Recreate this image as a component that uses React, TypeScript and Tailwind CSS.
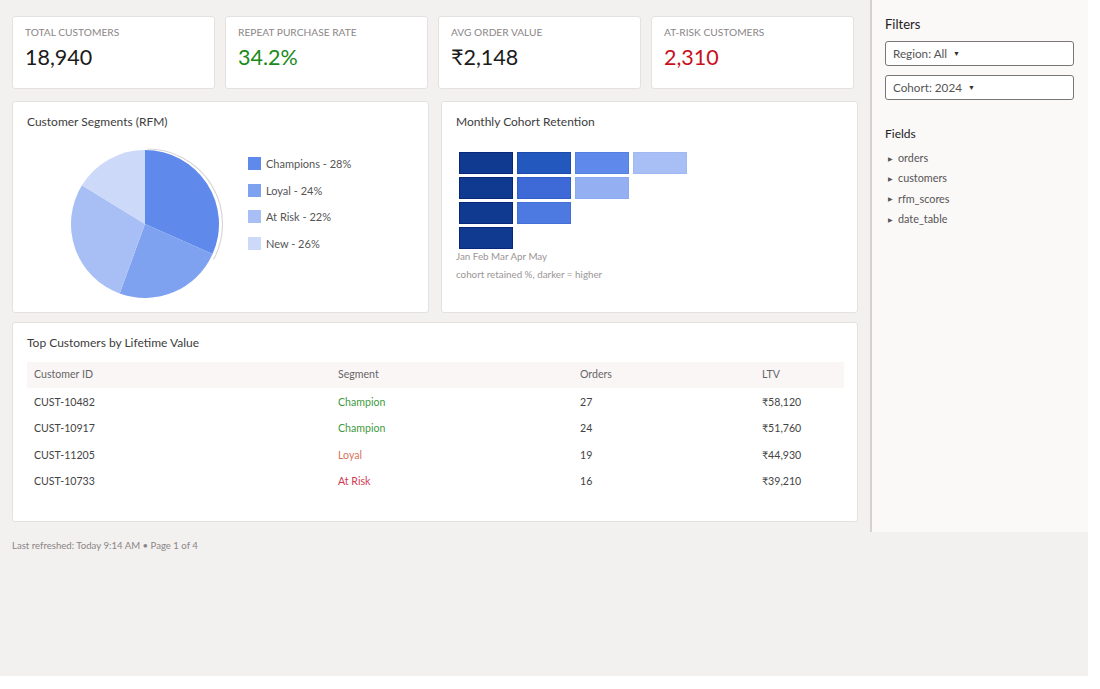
const kpis = [
  { label: 'TOTAL CUSTOMERS', value: '18,940', color: 'text-[#1b1b1b]' },
  { label: 'REPEAT PURCHASE RATE', value: '34.2%', color: 'text-[#188a18]' },
  { label: 'AVG ORDER VALUE', value: '₹2,148', color: 'text-[#1b1b1b]' },
  { label: 'AT-RISK CUSTOMERS', value: '2,310', color: 'text-[#c8101e]' },
];

const segments = [
  { label: 'Champions - 28%', color: '#5f8aeb', from: 0, to: 114 },
  { label: 'Loyal - 24%', color: '#7fa2f0', from: 114, to: 200 },
  { label: 'At Risk - 22%', color: '#a8bff5', from: 200, to: 301.5 },
  { label: 'New - 26%', color: '#cdd9f9', from: 301.5, to: 360 },
];

const cohort = [
  ['bg-[#0f3a8f] border-[#08267a]', 'bg-[#2359bf] border-[#1b4aa8]', 'bg-[#5f8aeb] border-[#5480e0]', 'bg-[#a8bff5] border-[#a0b9f3]'],
  ['bg-[#0f3a8f] border-[#08267a]', 'bg-[#3d6ad6] border-[#325ec8]', 'bg-[#94b0f3] border-[#8caaf0]'],
  ['bg-[#0f3a8f] border-[#08267a]', 'bg-[#4d7ae0] border-[#4470d6]'],
  ['bg-[#0f3a8f] border-[#08267a]'],
];

const customers = [
  { id: 'CUST-10482', seg: 'Champion', segColor: 'text-[#3f9a3f]', orders: 27, ltv: '₹58,120' },
  { id: 'CUST-10917', seg: 'Champion', segColor: 'text-[#3f9a3f]', orders: 24, ltv: '₹51,760' },
  { id: 'CUST-11205', seg: 'Loyal', segColor: 'text-[#d9735a]', orders: 19, ltv: '₹44,930' },
  { id: 'CUST-10733', seg: 'At Risk', segColor: 'text-[#d23a52]', orders: 16, ltv: '₹39,210' },
];

const fields = ['orders', 'customers', 'rfm_scores', 'date_table'];

function slice(cx: number, cy: number, r: number, a0: number, a1: number) {
  const p = (a: number) => {
    const rad = (a * Math.PI) / 180;
    return [cx + r * Math.sin(rad), cy - r * Math.cos(rad)];
  };
  const [x0, y0] = p(a0);
  const [x1, y1] = p(a1);
  const large = a1 - a0 > 180 ? 1 : 0;
  return `M${cx},${cy} L${x0},${y0} A${r},${r} 0 ${large} 1 ${x1},${y1} Z`;
}

// thin grey rim that sits just outside the pie on the right
function rim(cx: number, cy: number, r: number, a1: number) {
  const rad = (a1 * Math.PI) / 180;
  return `M${cx},${cy - r} A${r},${r} 0 0 1 ${cx + r * Math.sin(rad)},${cy - r * Math.cos(rad)}`;
}

const Card = ({ className, children }: { className?: string; children: React.ReactNode }) => (
  <div className={`bg-white border border-[#e6e1e1] rounded-[3px] ${className ?? ''}`}>{children}</div>
);

export default function App() {
  return (
    <div className="w-[1088px] h-[676px] bg-[#f3f0f0] flex text-[#444]" style={{ fontFamily: 'Lato, "Open Sans", sans-serif' }}>
      <main className="w-[870px] px-[12px] pt-[16px]">
        <div className="flex gap-[10px]">
          {kpis.map((k) => (
            <Card key={k.label} className="w-[203px] h-[73px] px-[12px] pt-[9px]">
              <div className="text-[10.2px] leading-[13px] text-[#8a8686]">{k.label}</div>
              <div className={`text-[21.5px] leading-[28px] mt-[4px] ${k.color}`}>{k.value}</div>
            </Card>
          ))}
        </div>

        <div className="flex gap-[12px] mt-[12px]">
          <Card className="w-[417px] h-[212px] px-[14px] pt-[11px] flex flex-col">
            <div className="text-[12px] leading-[17px] text-[#3c3c3c]">Customer Segments (RFM)</div>
            <div className="flex items-start mt-[4px]">
              <svg width="220" height="170" viewBox="0 0 220 170" className="ml-[-14px]">
                <path d={rim(134.5, 90, 75, 118)} fill="none" stroke="#dcd6d6" strokeWidth="1.2" />
                {segments.map((s) => (
                  <path key={s.label} d={slice(132, 90, 74, s.from, s.to)} fill={s.color} />
                ))}
              </svg>
              <ul className="ml-[15px] mt-[23px] flex flex-col gap-[13.7px]">
                {segments.map((s) => (
                  <li key={s.label} className="flex items-center gap-[5px] text-[11px] leading-[13px] text-[#555]">
                    <span className="w-[13px] h-[13px] inline-block" style={{ background: s.color }} />
                    {s.label}
                  </li>
                ))}
              </ul>
            </div>
          </Card>

          <Card className="w-[417px] h-[212px] px-[14px] pt-[11px]">
            <div className="text-[12px] leading-[17px] text-[#3c3c3c]">Monthly Cohort Retention</div>
            <div className="mt-[22px] ml-[3px] flex flex-col gap-[3px]">
              {cohort.map((row, i) => (
                <div key={i} className="flex gap-[4px]">
                  {row.map((c, j) => (
                    <div key={j} className={`w-[54px] h-[22px] border ${c}`} />
                  ))}
                </div>
              ))}
            </div>
            <div className="text-[9.8px] leading-[14px] text-[#9a9595]">Jan Feb Mar Apr May</div>
            <div className="text-[9.8px] leading-[14px] text-[#9a9595] mt-[4px]">cohort retained %, darker = higher</div>
          </Card>
        </div>

        <Card className="w-[846px] h-[200px] mt-[9px] px-[14px] pt-[11px]">
          <div className="text-[12px] leading-[17px] text-[#3c3c3c]">Top Customers by Lifetime Value</div>
          <table className="w-[817px] mt-[11px] text-[10.6px]">
            <thead>
              <tr className="bg-[#faf6f6] h-[26px] text-[#666]">
                <th className="text-left font-normal pl-[7px] w-[311px]">Customer ID</th>
                <th className="text-left font-normal w-[242px]">Segment</th>
                <th className="text-left font-normal w-[182px]">Orders</th>
                <th className="text-left font-normal">LTV</th>
              </tr>
            </thead>
            <tbody className="text-[#444]">
              {customers.map((c) => (
                <tr key={c.id} className="h-[26.5px]">
                  <td className="pl-[7px] pt-[3px]">{c.id}</td>
                  <td className={`pt-[3px] ${c.segColor}`}>{c.seg}</td>
                  <td className="pt-[3px]">{c.orders}</td>
                  <td className="pt-[3px]">{c.ltv}</td>
                </tr>
              ))}
            </tbody>
          </table>
        </Card>

        <div className="mt-[17px] text-[9.6px] text-[#8a8585]">Last refreshed: Today 9:14 AM • Page 1 of 4</div>
      </main>

      <aside className="w-[218px] h-[532px] bg-[#fbf8f8] border-l-2 border-[#d6d1d1] px-[13px] pt-[15px]">
        <div className="text-[13px] leading-[18px] text-[#222]">Filters</div>
        <div className="mt-[8px] flex flex-col gap-[9px]">
          {['Region: All', 'Cohort: 2024'].map((f) => (
            <div key={f} className="h-[25px] w-[189px] border border-[#7a7676] rounded-[3px] bg-white flex items-center px-[7px] text-[11.7px] text-[#555]">
              {f}
              <span className="ml-[6px] text-[7px] text-[#333]">▼</span>
            </div>
          ))}
        </div>
        <div className="mt-[25px] text-[12px] leading-[17px] text-[#222]">Fields</div>
        <ul className="mt-[6px] flex flex-col">
          {fields.map((f) => (
            <li key={f} className="h-[20.4px] flex items-center text-[10.8px] text-[#555]">
              <span className="text-[6px] text-[#555] ml-[3px] mr-[5px]">▶</span>
              {f}
            </li>
          ))}
        </ul>
      </aside>
    </div>
  );
}
